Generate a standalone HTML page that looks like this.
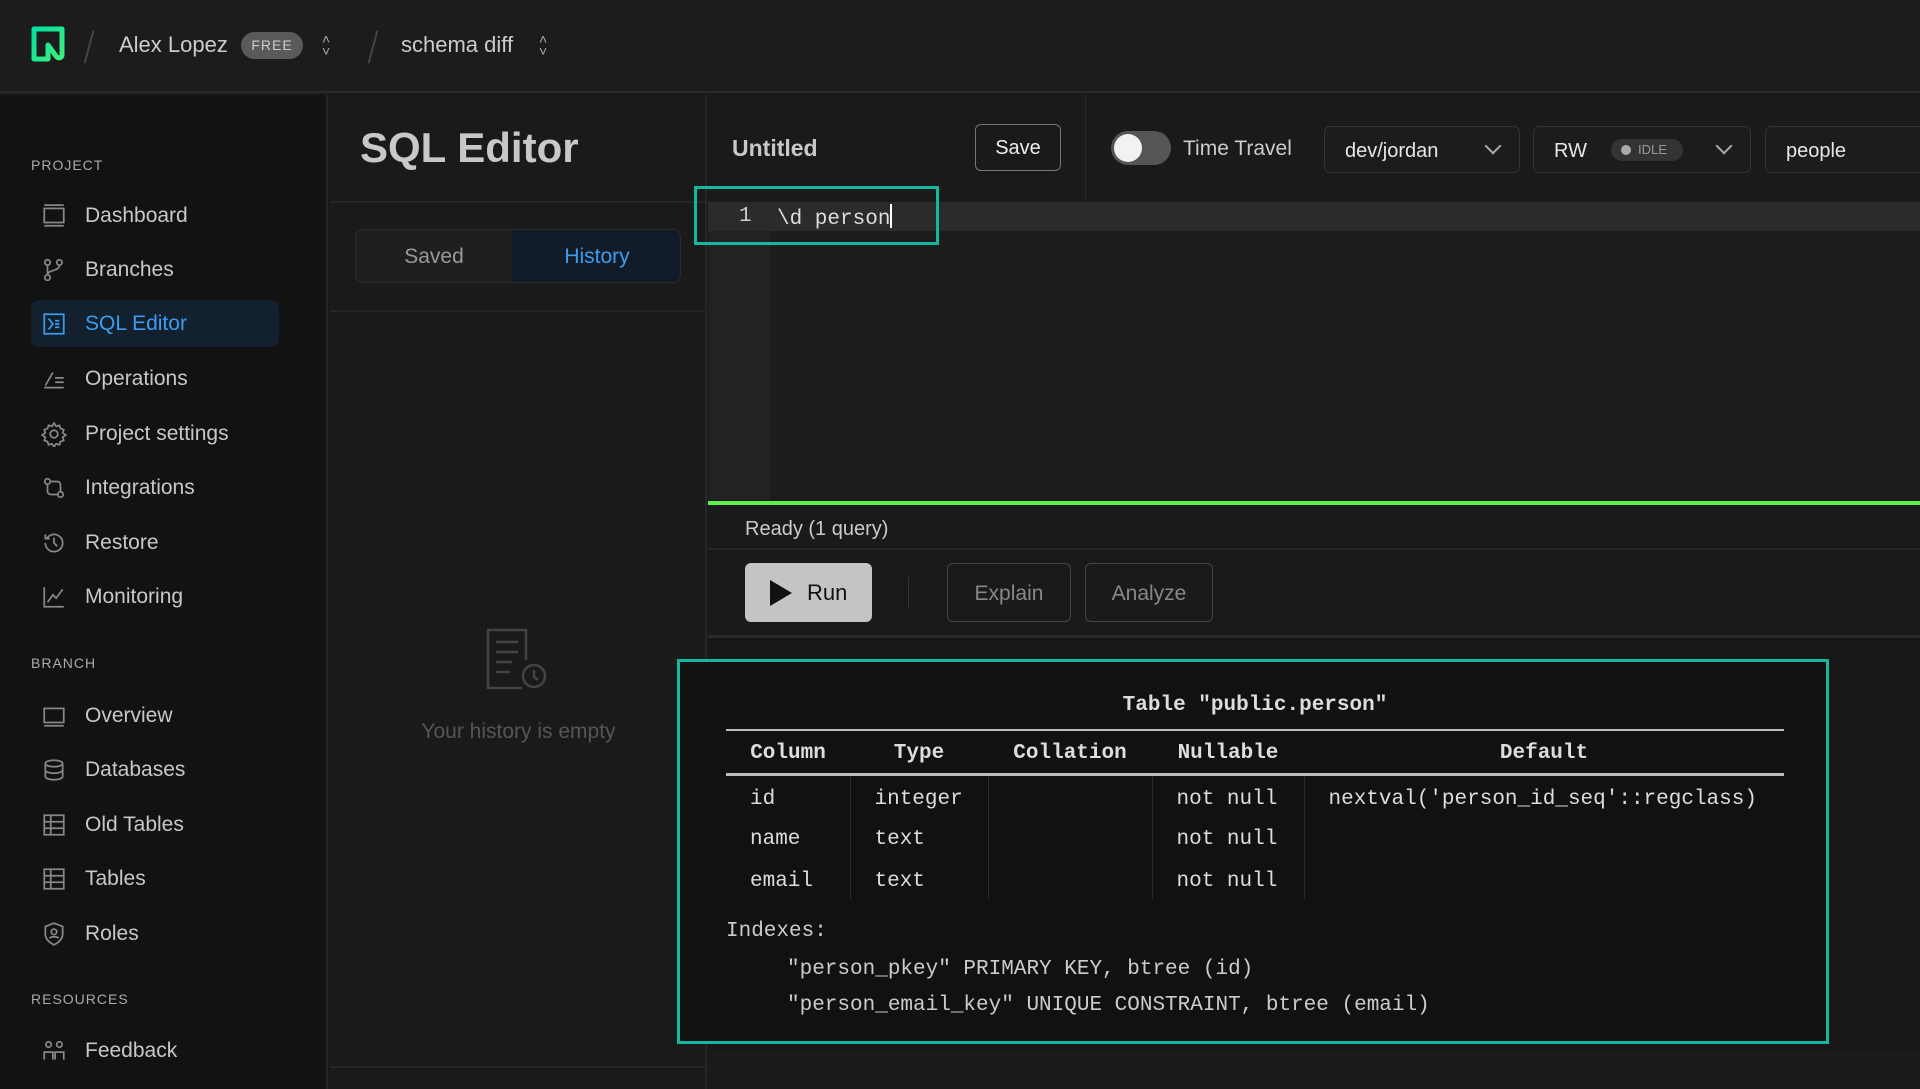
<!DOCTYPE html>
<html><head><meta charset="utf-8"><style>
*{box-sizing:border-box;margin:0;padding:0}
body{width:1920px;height:1089px;background:#1a1a1a;font-family:"Liberation Sans",sans-serif;color:#ddd;position:relative;overflow:hidden}
.a{position:absolute}
.mono{font-family:"Liberation Mono",monospace}
.nav{position:absolute;left:31px;width:248px;height:47px;display:flex;align-items:center;font-size:21px;color:#c8c8c8}
.nav svg{position:absolute;left:10px;width:26px;height:26px;fill:none;stroke:#888;stroke-width:1.6}
.nav span{position:absolute;left:54px;top:12px}
.sec{position:absolute;left:31px;font-size:14px;letter-spacing:1px;color:#aaa}
.box{position:absolute;border:1px solid #333;border-radius:6px;background:#1c1c1c;height:47px;display:flex;align-items:center;font-size:20px;color:#e6e6e6}
.chev{position:absolute;width:12px;height:12px;border-right:2px solid #aaa;border-bottom:2px solid #aaa;transform:rotate(45deg)}
td,th{font-family:"Liberation Mono",monospace;font-size:21px;color:#ddd;text-align:left;height:42px;padding:0 0 0 24px;font-weight:normal}
th{font-weight:bold;text-align:center;padding:0;height:44px}
</style></head><body>
<!-- header -->
<div class="a" style="left:0;top:0;width:1920px;height:93px;background:#1c1c1c;border-bottom:2px solid #2a2a2a"></div>
<svg class="a" style="left:30px;top:25px" width="36" height="38" viewBox="0 0 36 38"><defs><linearGradient id="g" x1="0" y1="0" x2="1" y2="1"><stop offset="0" stop-color="#00e0a0"/><stop offset="1" stop-color="#3ef07a"/></linearGradient></defs><path d="M4 4h28v26c0 3-4 4-6 1l-8-11v14H4z" fill="none" stroke="url(#g)" stroke-width="5" stroke-linejoin="round"/></svg>
<div class="a" style="left:88px;top:30px;width:2px;height:34px;background:#444;transform:rotate(15deg)"></div>
<div class="a" style="left:119px;top:32px;font-size:22px;color:#ccc">Alex Lopez</div>
<div class="a" style="left:241px;top:32px;width:62px;height:27px;border-radius:14px;background:#5a5a5a;color:#ccc;font-size:14px;text-align:center;line-height:27px;letter-spacing:1px">FREE</div>
<div class="a" style="left:322px;top:33px;font-size:14px;color:#aaa;line-height:12px">˄<br>˅</div>
<div class="a" style="left:372px;top:30px;width:2px;height:34px;background:#444;transform:rotate(15deg)"></div>
<div class="a" style="left:401px;top:32px;font-size:22px;color:#ccc">schema diff</div>
<div class="a" style="left:539px;top:33px;font-size:14px;color:#aaa;line-height:12px">˄<br>˅</div>
<!-- sidebar -->
<div class="a" style="left:0;top:95px;width:328px;height:994px;background:#121212;border-right:2px solid #262626"></div>
<div class="sec" style="top:157px">PROJECT</div>
<div class="nav" style="top:192px"><svg viewBox="0 0 24 24"><rect x="3" y="5" width="18" height="13"/><path d="M3 21h18M3 2h18"/></svg><span>Dashboard</span></div>
<div class="nav" style="top:246px"><svg viewBox="0 0 24 24"><circle cx="6" cy="5" r="2.5"/><circle cx="17" cy="5" r="2.5"/><circle cx="6" cy="19" r="2.5"/><path d="M6 7.5v9M17 7.5c0 6-11 4-11 9"/></svg><span>Branches</span></div>
<div class="nav" style="top:300px;background:#13202e;border-radius:8px;color:#3b9cf0"><svg viewBox="0 0 24 24" style="stroke:#3b9cf0"><rect x="3" y="3" width="18" height="18"/><path d="M7 7l4 5-4 5M13 9h4M13 12h4M13 15h4"/></svg><span>SQL Editor</span></div>
<div class="nav" style="top:355px"><svg viewBox="0 0 24 24"><path d="M3 20h18M4 18l7-12M13 11h8M13 15h8"/></svg><span>Operations</span></div>
<div class="nav" style="top:410px"><svg viewBox="0 0 24 24"><circle cx="12" cy="12" r="3.5"/><path d="M12 2l2 3 3-1 1 3 3 1-1 3 3 2-3 2 1 3-3 1-1 3-3-1-2 3-2-3-3 1-1-3-3-1 1-3-3-2 3-2-1-3 3-1 1-3 3 1z"/></svg><span>Project settings</span></div>
<div class="nav" style="top:464px"><svg viewBox="0 0 24 24"><circle cx="6" cy="6" r="2.5"/><circle cx="18" cy="18" r="2.5"/><path d="M6 9v6a3 3 0 003 3h6M18 15V9a3 3 0 00-3-3H9"/></svg><span>Integrations</span></div>
<div class="nav" style="top:519px"><svg viewBox="0 0 24 24"><path d="M4 12a8 8 0 108-8c-3 0-5 1.5-6.5 3.5M4 4v4h4M12 7v5l3 3"/></svg><span>Restore</span></div>
<div class="nav" style="top:573px"><svg viewBox="0 0 24 24"><path d="M3 3v18h18M6 17l5-7 3 3 6-8"/></svg><span>Monitoring</span></div>
<div class="sec" style="top:655px">BRANCH</div>
<div class="nav" style="top:692px"><svg viewBox="0 0 24 24"><rect x="3" y="5" width="18" height="13"/><path d="M3 21h18"/></svg><span>Overview</span></div>
<div class="nav" style="top:746px"><svg viewBox="0 0 24 24"><ellipse cx="12" cy="6" rx="8" ry="3"/><path d="M4 6v12c0 1.7 3.6 3 8 3s8-1.3 8-3V6M4 12c0 1.7 3.6 3 8 3s8-1.3 8-3"/></svg><span>Databases</span></div>
<div class="nav" style="top:801px"><svg viewBox="0 0 24 24"><rect x="3" y="3" width="18" height="18"/><path d="M3 9h18M3 15h18M9 3v18"/></svg><span>Old Tables</span></div>
<div class="nav" style="top:855px"><svg viewBox="0 0 24 24"><rect x="3" y="3" width="18" height="18"/><path d="M3 9h18M3 15h18M9 3v18"/></svg><span>Tables</span></div>
<div class="nav" style="top:910px"><svg viewBox="0 0 24 24"><path d="M12 2l8 3v7c0 5-4 8-8 10-4-2-8-5-8-10V5z"/><circle cx="12" cy="10" r="2.5"/><path d="M8 16c1-2 7-2 8 0"/></svg><span>Roles</span></div>
<div class="sec" style="top:991px">RESOURCES</div>
<div class="nav" style="top:1027px"><svg viewBox="0 0 24 24"><circle cx="7" cy="6" r="2.5"/><circle cx="17" cy="6" r="2.5"/><path d="M3 20v-7h8v7M13 20v-7h8v7"/></svg><span>Feedback</span></div>
<!-- second panel -->
<div class="a" style="left:330px;top:95px;width:377px;height:994px;background:#1a1a1a;border-right:2px solid #262626"></div>
<div class="a" style="left:360px;top:124px;font-size:42px;font-weight:bold;color:#c8c8c8">SQL Editor</div>
<div class="a" style="left:330px;top:201px;width:377px;height:2px;background:#262626"></div>
<div class="a" style="left:355px;top:229px;width:326px;height:54px;border:1px solid #2c2c2c;border-radius:8px;background:#1f1f1f;overflow:hidden">
<div class="a" style="left:0;top:1px;width:156px;height:54px;line-height:52px;text-align:center;font-size:21px;color:#999">Saved</div>
<div class="a" style="left:156px;top:0;width:170px;height:54px;line-height:54px;text-align:center;font-size:21px;color:#3b9cf0;background:#111c28">History</div></div>
<div class="a" style="left:330px;top:310px;width:377px;height:2px;background:#262626"></div>
<svg class="a" style="left:482px;top:626px" width="72" height="72" viewBox="0 0 72 72" fill="none" stroke="#444" stroke-width="2.5"><path d="M40 62H6V4h38v30"/><path d="M14 16h22M14 26h22M14 36h16M14 46h14"/><circle cx="52" cy="50" r="11"/><path d="M52 44v7l4 3"/></svg>
<div class="a" style="left:330px;top:720px;width:377px;text-align:center;font-size:21px;color:#555">Your history is empty</div>
<div class="a" style="left:330px;top:1066px;width:377px;height:2px;background:#262626"></div>
<!-- editor top bar -->
<div class="a" style="left:732px;top:135px;font-size:23px;font-weight:bold;color:#c8c8c8">Untitled</div>
<div class="a" style="left:975px;top:124px;width:86px;height:47px;border:1px solid #777;border-radius:6px;text-align:center;line-height:47px;font-size:20px;color:#eee">Save</div>
<div class="a" style="left:1085px;top:95px;width:1px;height:107px;background:#2c2c2c"></div>
<div class="a" style="left:1111px;top:131px;width:60px;height:34px;border-radius:17px;background:#555"><div class="a" style="left:3px;top:3px;width:28px;height:28px;border-radius:50%;background:#f2f2f2"></div></div>
<div class="a" style="left:1183px;top:137px;font-size:21px;color:#ccc">Time Travel</div>
<div class="box" style="left:1324px;top:126px;width:196px"><span style="margin-left:20px;margin-top:3px">dev/jordan</span><div class="chev" style="left:162px;top:13px"></div></div>
<div class="box" style="left:1533px;top:126px;width:218px"><span style="margin-left:20px;margin-top:3px">RW</span><div class="a" style="left:77px;top:12px;width:72px;height:22px;border-radius:11px;background:#333;font-size:13px;color:#999;line-height:22px;padding-left:27px">IDLE<div class="a" style="left:10px;top:6px;width:10px;height:10px;border-radius:50%;background:#aaa"></div></div><div class="chev" style="left:184px;top:13px"></div></div>
<div class="box" style="left:1765px;top:126px;width:170px;border-right:none;border-radius:6px 0 0 6px"><span style="margin-left:20px;margin-top:3px">people</span></div>
<!-- editor -->
<div class="a" style="left:708px;top:202px;width:1212px;height:298px;background:#1c1c1c"></div>
<div class="a" style="left:708px;top:230px;width:62px;height:270px;background:#222"></div>
<div class="a" style="left:708px;top:202px;width:1212px;height:29px;background:#2b2b2b"></div>
<div class="a mono" style="left:739px;top:205px;font-size:21px;color:#ccc">1</div>
<div class="a mono" style="left:777px;top:204px;font-size:21px;color:#ddd">\d person<span style="display:inline-block;width:2px;height:24px;background:#fff;vertical-align:-4px"></span></div>
<div class="a" style="left:694px;top:186px;width:245px;height:59px;border:3px solid #14b8a0"></div>
<div class="a" style="left:708px;top:501px;width:1212px;height:4px;background:#5cf04c"></div>
<div class="a" style="left:745px;top:518px;font-size:20px;color:#ccc">Ready (1 query)</div>
<div class="a" style="left:708px;top:548px;width:1212px;height:2px;background:#262626"></div>
<div class="a" style="left:745px;top:563px;width:127px;height:59px;border-radius:6px;background:#c4c4c4"><svg class="a" style="left:25px;top:17px" width="22" height="26"><path d="M0 0L22 13 0 26z" fill="#111"/></svg><span class="a" style="left:62px;top:17px;font-size:22px;color:#111">Run</span></div>
<div class="a" style="left:908px;top:577px;width:1px;height:32px;background:#333"></div>
<div class="a" style="left:947px;top:563px;width:124px;height:59px;border:1px solid #444;border-radius:6px;text-align:center;line-height:60px;font-size:21px;color:#888">Explain</div>
<div class="a" style="left:1085px;top:563px;width:128px;height:59px;border:1px solid #444;border-radius:6px;text-align:center;line-height:60px;font-size:21px;color:#888">Analyze</div>
<div class="a" style="left:708px;top:635px;width:1212px;height:3px;background:#2a2a2a"></div>
<div class="a" style="left:708px;top:638px;width:1212px;height:412px;background:#171717"></div>
<!-- results -->
<div class="a" style="left:677px;top:659px;width:1152px;height:385px;border:3px solid #14b8a0;background:#111"></div>
<div class="a mono" style="left:726px;top:694px;width:1058px;text-align:center;font-size:21px;font-weight:bold;color:#ddd">Table "public.person"</div>
<table class="a" style="left:726px;top:729px;width:1058px;border-collapse:collapse">
<tr style="border-top:2px solid #bbb;border-bottom:3px solid #bbb"><th style="width:124px;padding-top:4px">Column</th><th style="width:138px;padding-top:4px">Type</th><th style="width:164px;padding-top:4px">Collation</th><th style="width:152px;padding-top:4px">Nullable</th><th style="padding-top:4px">Default</th></tr>
<tr><td style="border-right:1px solid #2a2a2a;padding-top:8px">id</td><td style="border-right:1px solid #2a2a2a;padding-top:8px">integer</td><td style="border-right:1px solid #2a2a2a"></td><td style="border-right:1px solid #2a2a2a;padding-top:8px">not null</td><td style="padding-top:8px">nextval('person_id_seq'::regclass)</td></tr>
<tr><td style="border-right:1px solid #2a2a2a;padding-top:4px">name</td><td style="border-right:1px solid #2a2a2a;padding-top:4px">text</td><td style="border-right:1px solid #2a2a2a"></td><td style="border-right:1px solid #2a2a2a;padding-top:4px">not null</td><td></td></tr>
<tr><td style="border-right:1px solid #2a2a2a;padding-top:4px">email</td><td style="border-right:1px solid #2a2a2a;padding-top:4px">text</td><td style="border-right:1px solid #2a2a2a"></td><td style="border-right:1px solid #2a2a2a;padding-top:4px">not null</td><td></td></tr>
</table>
<div class="a mono" style="left:726px;top:920px;font-size:21px;color:#ccc">Indexes:</div>
<div class="a mono" style="left:787px;top:958px;font-size:21px;color:#ccc">"person_pkey" PRIMARY KEY, btree (id)</div>
<div class="a mono" style="left:787px;top:994px;font-size:21px;color:#ccc">"person_email_key" UNIQUE CONSTRAINT, btree (email)</div>
</body></html>
